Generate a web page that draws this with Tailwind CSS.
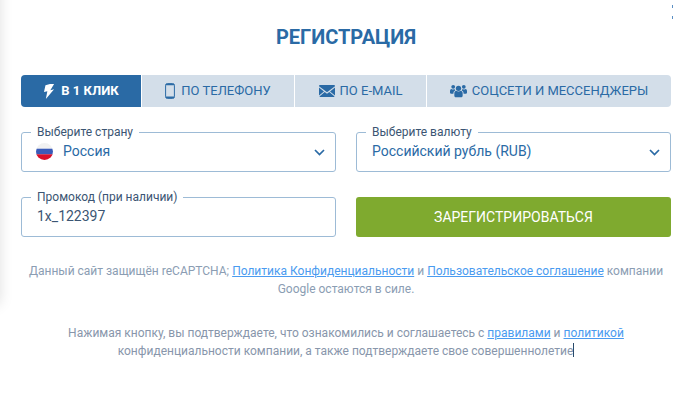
<!DOCTYPE html>
<html lang="ru">
<head>
    <meta charset="UTF-8">
    <meta name="viewport" content="width=device-width, initial-scale=1.0">
    <title>Регистрация</title>
    <script src="https://cdn.jsdelivr.net/npm/@tailwindcss/browser@4"></script>
</head>
<body class="bg-white font-['Roboto',sans-serif] overflow-hidden">
<div class="relative h-[401px] w-[673px] overflow-hidden pl-[21px] pr-[2px]">
    <!-- left shadow of the modal -->
    <div class="absolute -left-[30px] -top-[30px] h-[335px] w-[30px] rounded-[6px] shadow-[0_0_14px_rgba(0,0,0,0.13)]"></div>
    <!-- scrollbar remnants -->
    <div class="absolute right-0 top-[5px] h-[3px] w-[1px] bg-[#5b8fc4]"></div>
    <div class="absolute right-0 top-[16px] h-[3px] w-[1px] bg-[#5b8fc4]"></div>

    <div class="relative">
        <h1 class="pt-[26px] h-[75px] text-center text-[20px] leading-[22px] font-bold text-[#2a6aa5]">РЕГИСТРАЦИЯ</h1>

        <!-- Tabs -->
        <div class="flex h-[32px] gap-[1px] text-[13px] font-normal text-[#2a6aa5]">
            <div class="flex w-[120px] items-center justify-center gap-[5px] rounded-l-[4px] bg-[#2a6aa5] font-bold text-white">
                <svg class="h-[15px] w-[13px]" viewBox="0 0 13 16" fill="#fff"><path d="M7 0 2.2 1.4 0.6 8.6l3.6-1L2.6 16l8.8-10.4-4 1L11.4 0z"/></svg>
                <span>В 1 КЛИК</span>
            </div>
            <div class="flex w-[152px] items-center justify-center gap-[6px] bg-[#d3dee9]">
                <svg class="h-[16px] w-[10px]" viewBox="0 0 10 16" fill="none" stroke="#2a6aa5"><rect x="0.6" y="0.6" width="8.800" height="14.800" rx="1.600" stroke-width="1"/><path d="M1 1.600h8M1 14.200h8" stroke-width="1.400"/></svg>
                <span>ПО ТЕЛЕФОНУ</span>
            </div>
            <div class="flex w-[131px] items-center justify-center gap-[5px] bg-[#d3dee9]">
                <svg class="h-[12px] w-[16px]" viewBox="0 0 16 12" fill="#2a6aa5"><path d="M0 1.2C0 .5.5 0 1.2 0h13.6c.7 0 1.200 .5 1.200 1.200L8 7.200z"/><path d="M0 2.600v8l5-4.200zM16 2.600v8l-5-4.200z"/><path d="M.4 11.600 5.700 7 8 8.700 10.300 7l5.300 4.600c-.2.300-.5.400-.8.400H1.200c-.3 0-.6-.1-.8-.4z"/></svg>
                <span>ПО E-MAIL</span>
            </div>
            <div class="flex w-[244px] items-center justify-center gap-[5px] rounded-r-[4px] bg-[#d3dee9]">
                <svg class="h-[14px] w-[17px]" viewBox="0 0 18 14" fill="#2a6aa5"><circle cx="9" cy="4.200" r="2.800"/><circle cx="3.400" cy="2.600" r="2"/><circle cx="14.600" cy="2.600" r="2"/><path d="M4.600 9.600c0-1.900 1-2.800 2-2.800.8.500 1.500.8 2.400.8s1.600-.3 2.400-.8c1 0 2 .9 2 2.800v2.400c0 1-.7 1.600-1.600 1.600H6.200c-.9 0-1.600-.6-1.600-1.600z"/><path d="M3.600 9.800H.9C.4 9.800 0 9.400 0 8.900V7c0-1.400.7-2.200 1.600-2.200.6.400 1.200.6 1.800.6.500 0 1-.1 1.400-.4.100.6.400 1.100.8 1.500-1.300.4-2 1.500-2 3.300zM14.400 9.800h2.700c.5 0 .9-.4.900-.9V7c0-1.400-.7-2.200-1.600-2.200-.6.400-1.200.6-1.800.6-.5 0-1-.1-1.400-.4-.1.600-.4 1.100-.8 1.500 1.300.4 2 1.500 2 3.300z"/></svg>
                <span>СОЦСЕТИ И МЕССЕНДЖЕРЫ</span>
            </div>
        </div>

        <!-- Form -->
        <div class="mt-[25px] grid grid-cols-[315px_315px] gap-x-[20px] gap-y-[25px]">
            <div class="relative flex h-[40px] items-center justify-between rounded-[3px] border border-[#9dbbd6] pl-[14px] pr-[10px] pb-[2px]">
                <span class="absolute -top-[8px] left-[9px] bg-white px-[6px] text-[12px] leading-[15px] text-[#3b5573]">Выберите страну</span>
                <span class="flex items-center gap-[10px] text-[14px] text-[#2a6aa5]">
                    <svg class="h-[17px] w-[17px]" viewBox="0 0 17 17"><clipPath id="flag"><circle cx="8.500" cy="8.500" r="8.500"/></clipPath><g clip-path="url(#flag)"><rect width="17" height="5.700" fill="#f2f2f2"/><rect y="5.700" width="17" height="5.700" fill="#3a5bb8"/><rect y="11.300" width="17" height="5.700" fill="#d8102a"/></g></svg>
                    Россия
                </span>
                <svg class="mt-[2px] h-[7px] w-[11px]" viewBox="0 0 11 7" fill="none" stroke="#2a6aa5" stroke-width="1.700"><path d="M1 1l4.500 4.500L10 1"/></svg>
            </div>
            <div class="relative flex h-[40px] items-center justify-between rounded-[3px] border border-[#9dbbd6] pl-[15px] pr-[10px] pb-[2px]">
                <span class="absolute -top-[8px] left-[9px] bg-white px-[6px] text-[12px] leading-[15px] text-[#3b5573]">Выберите валюту</span>
                <span class="text-[14px] text-[#2a6aa5]">Российский рубль (RUB)</span>
                <svg class="mt-[2px] h-[7px] w-[11px]" viewBox="0 0 11 7" fill="none" stroke="#2a6aa5" stroke-width="1.700"><path d="M1 1l4.500 4.500L10 1"/></svg>
            </div>
            <div class="relative flex h-[40px] items-center rounded-[3px] border border-[#9dbbd6] pl-[15px] pb-[2px]">
                <span class="absolute -top-[8px] left-[9px] bg-white px-[6px] text-[12px] leading-[15px] text-[#3b5573]">Промокод (при наличии)</span>
                <span class="text-[14px] text-[#3b5573]">1x_122397</span>
            </div>
            <div class="flex h-[40px] items-center justify-center rounded-[3px] bg-[#7faa2f] text-[14px] font-normal text-white">ЗАРЕГИСТРИРОВАТЬСЯ</div>
        </div>

        <!-- Notes -->
        <p class="mt-[25px] text-center text-[12px] leading-[18px] text-[#8b9db3]">
            Данный сайт защищён reCAPTCHA; <a class="text-[#4a9bf0] underline">Политика Конфиденциальности</a> и <a class="text-[#4a9bf0] underline">Пользовательское соглашение</a> компании<br>Google остаются в силе.
        </p>
        <p class="mt-[26px] text-center text-[12px] leading-[18px] text-[#8896ab]">
            Нажимая кнопку, вы подтверждаете, что ознакомились и соглашаетесь с <a class="text-[#4a9bf0] underline">правилами</a> и <a class="text-[#4a9bf0] underline">политикой</a><br>конфиденциальности компании, а также подтверждаете свое совершеннолетие<span class="inline-block h-[14px] w-[1px] bg-[#2a4a6a] align-[-2px]"></span>
        </p>
    </div>
</div>
</body>
</html>
